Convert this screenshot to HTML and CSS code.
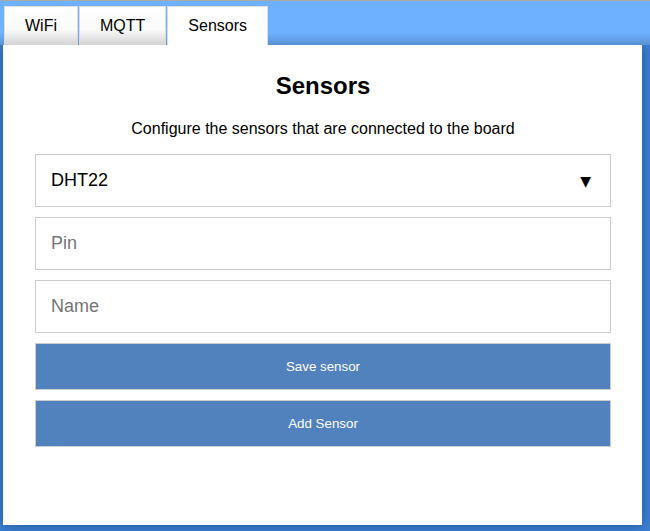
FILE: index.html
```html
<!DOCTYPE html>
<html>
<head>
<meta charset="utf-8">
<link rel="stylesheet" href="styles.css">
</head>
<body>
<div class="topbar">
  <div class="tab">WiFi</div>
  <div class="tab">MQTT</div>
  <div class="tab active">Sensors</div>
</div>
<div class="card">
  <h2 class="title">Sensors</h2>
  <p class="subtitle">Configure the sensors that are connected to the board</p>
  <div class="form">
    <div class="field select"><span>DHT22</span><span class="arrow">▼</span></div>
    <input class="field" type="text" placeholder="Pin">
    <input class="field" type="text" placeholder="Name">
    <button class="btn">Save sensor</button>
    <button class="btn">Add Sensor</button>
  </div>
</div>
</body>
</html>
```
FILE: styles.css
```css
html, body {
  margin: 0;
  padding: 0;
}
body {
  width: 650px;
  height: 531px;
  overflow: hidden;
  box-sizing: border-box;
  border-top: 1px solid #a9a9a9;
  background: #3a7fd5;
  font-family: "Liberation Sans", Arial, sans-serif;
}
.topbar {
  background: linear-gradient(to bottom, #6db1ff 0%, #6db1ff 72%, #639fe6 88%, #5a90d2 100%);
  height: 44px;
  box-sizing: border-box;
  padding: 5px 0 0 4px;
  display: flex;
  align-items: flex-end;
  gap: 1px;
  position: relative;
  z-index: 2;
}
.tab {
  height: 39px;
  box-sizing: border-box;
  padding: 0 20px;
  border: 1px solid #dcdcdc;
  border-bottom: none;
  display: flex;
  align-items: center;
  font-size: 16px;
  color: #000;
  background: linear-gradient(to bottom, #ffffff 0%, #fafafa 60%, #d2d2d2 100%);
}
.tab.active {
  background: #fff;
}
.card {
  margin: 0 8px 0 3px;
  height: 480px;
  background: #fff;
  box-shadow: 0 0 12px rgba(0, 0, 0, 0.35);
  box-sizing: border-box;
  padding: 27px 31px 0 32px;
  position: relative;
  z-index: 1;
}
.title {
  margin: 0;
  text-align: center;
  font-size: 24px;
  line-height: 28px;
  font-weight: bold;
  color: #000;
}
.subtitle {
  margin: 20px 0 0;
  text-align: center;
  font-size: 16px;
  line-height: 18px;
  color: #000;
}
.form {
  margin-top: 16px;
  display: flex;
  flex-direction: column;
  gap: 10px;
}
.field {
  height: 53px;
  box-sizing: border-box;
  border: 1px solid #cccccc;
  padding: 0 15px;
  font-family: "Liberation Sans", Arial, sans-serif;
  font-size: 18px;
  color: #000;
  background: #fff;
  outline: none;
  width: 100%;
  margin: 0;
}
.field::placeholder {
  color: #757575;
}
.select {
  display: flex;
  align-items: center;
  justify-content: space-between;
  padding-right: 19px;
}
.arrow {
  font-family: "DejaVu Sans", sans-serif;
  font-size: 14px;
}
.btn {
  height: 47px;
  box-sizing: border-box;
  border: 1px solid #cccccc;
  background: #5182bd;
  color: #fff;
  font-family: "Liberation Sans", Arial, sans-serif;
  font-size: 13.33px;
  width: 100%;
  margin: 0;
  padding: 0;
}
```
